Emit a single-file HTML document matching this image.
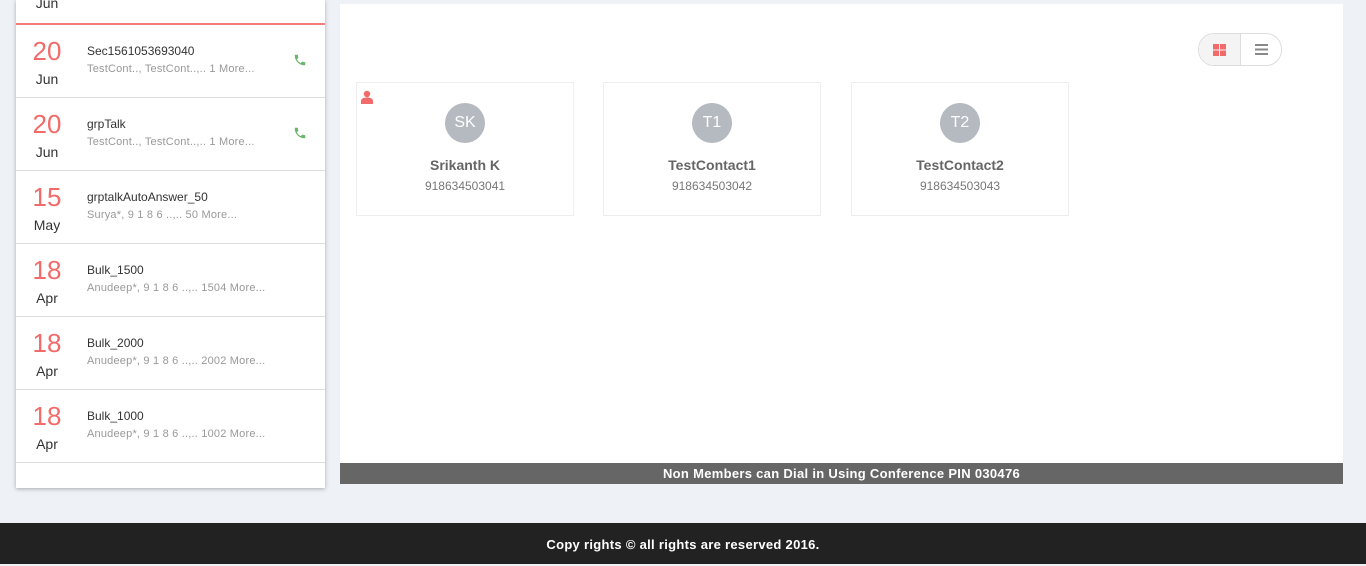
<!DOCTYPE html>
<html><head><style>
body{margin:0;width:1366px;height:564px;background:#eef1f6;font-family:"Liberation Sans",sans-serif;position:relative;overflow:hidden}
.left{position:absolute;left:16px;top:0;width:309px;height:488px;background:#fff;box-shadow:0 1px 4px rgba(0,0,0,.3)}
.row{position:absolute;left:0;width:309px;height:72px;border-bottom:1px solid #ddd}
.d{position:absolute;left:0;width:62px;text-align:center;top:11px;color:#f26b6b;font-size:26px}
.m{position:absolute;left:0;width:62px;text-align:center;top:46px;color:#333;font-size:14px}
.t{position:absolute;left:71px;top:19px;font-size:12px;color:#333}
.s{position:absolute;left:71px;top:38px;font-size:11px;color:#999;letter-spacing:.2px}
.ph{position:absolute;left:277px;top:28px}
.main{position:absolute;left:340px;top:4px;width:1003px;height:459px;background:#fff}
.bar{position:absolute;left:340px;top:463px;width:1003px;height:21px;background:#666;color:#fff;font-size:13px;text-align:center;line-height:22px;font-weight:bold;letter-spacing:.3px}
.foot{position:absolute;left:0;top:523px;width:1366px;height:41px;background:#222;color:#fff;font-size:13px;text-align:center;line-height:43px;font-weight:bold;letter-spacing:.3px}
.card{position:absolute;top:78px;width:216px;height:132px;border:1px solid #eee;text-align:center}
.av{width:40px;height:40px;border-radius:50%;background:#b5b9c0;color:#fff;font-size:16px;line-height:40px;margin:20px auto 0}
.n{color:#666;font-size:14px;font-weight:bold;margin-top:14px}
.p{color:#777;font-size:12px;margin-top:6px}
.tog{position:absolute;left:858px;top:29px;width:82px;height:31px;border:1px solid #ddd;border-radius:16px;overflow:hidden}
</style></head><body>
<div class="left">
<div class="m" style="top:-5px">Jun</div>
<div style="position:absolute;left:0;top:23px;width:309px;height:2px;background:#f47c7c"></div>
<div class="row" style="top:25px"><div class="d">20</div><div class="m">Jun</div><div class="t">Sec1561053693040</div><div class="s">TestCont.., TestCont..,.. 1 More...</div><svg class="ph" width="14" height="14" viewBox="0 0 24 24"><path fill="#6cb56c" d="M6.6 10.8c1.4 2.8 3.8 5.1 6.6 6.6l2.2-2.2c.3-.3.7-.4 1-.2 1.1.4 2.3.6 3.6.6.6 0 1 .4 1 1V20c0 .6-.4 1-1 1C10.6 21 3 13.4 3 4c0-.6.4-1 1-1h3.5c.6 0 1 .4 1 1 0 1.3.2 2.5.6 3.6.1.3 0 .7-.2 1z"/></svg></div>
<div class="row" style="top:98px"><div class="d">20</div><div class="m">Jun</div><div class="t">grpTalk</div><div class="s">TestCont.., TestCont..,.. 1 More...</div><svg class="ph" width="14" height="14" viewBox="0 0 24 24"><path fill="#6cb56c" d="M6.6 10.8c1.4 2.8 3.8 5.1 6.6 6.6l2.2-2.2c.3-.3.7-.4 1-.2 1.1.4 2.3.6 3.6.6.6 0 1 .4 1 1V20c0 .6-.4 1-1 1C10.6 21 3 13.4 3 4c0-.6.4-1 1-1h3.5c.6 0 1 .4 1 1 0 1.3.2 2.5.6 3.6.1.3 0 .7-.2 1z"/></svg></div>
<div class="row" style="top:171px"><div class="d">15</div><div class="m">May</div><div class="t">grptalkAutoAnswer_50</div><div class="s">Surya*, 9 1 8 6 ..,.. 50 More...</div></div>
<div class="row" style="top:244px"><div class="d">18</div><div class="m">Apr</div><div class="t">Bulk_1500</div><div class="s">Anudeep*, 9 1 8 6 ..,.. 1504 More...</div></div>
<div class="row" style="top:317px"><div class="d">18</div><div class="m">Apr</div><div class="t">Bulk_2000</div><div class="s">Anudeep*, 9 1 8 6 ..,.. 2002 More...</div></div>
<div class="row" style="top:390px"><div class="d">18</div><div class="m">Apr</div><div class="t">Bulk_1000</div><div class="s">Anudeep*, 9 1 8 6 ..,.. 1002 More...</div></div>
</div>
<div class="main">
<div class="tog"><div style="position:absolute;left:0;top:0;width:41px;height:31px;background:#f4f4f4;border-right:1px solid #ddd"></div>
<svg style="position:absolute;left:14px;top:10px" width="13" height="12"><rect x="0" y="0" width="6" height="5.5" fill="#f26b6b"/><rect x="7" y="0" width="6" height="5.5" fill="#f26b6b"/><rect x="0" y="6.5" width="6" height="5.5" fill="#f26b6b"/><rect x="7" y="6.5" width="6" height="5.5" fill="#f26b6b"/></svg>
<svg style="position:absolute;left:56px;top:10px" width="13" height="11"><rect y="0" width="13" height="2" fill="#888"/><rect y="4.5" width="13" height="2" fill="#888"/><rect y="9" width="13" height="2" fill="#888"/></svg></div>
<div class="card" style="left:16px"><svg style="position:absolute;left:4px;top:7px" width="12" height="14" viewBox="0 0 12 14"><circle cx="6" cy="4" r="3.2" fill="#f26b6b"/><path d="M0 14v-3c0-2 2-3.5 6-3.5s6 1.5 6 3.5v3z" fill="#f26b6b"/></svg><div class="av">SK</div><div class="n">Srikanth K</div><div class="p">918634503041</div></div>
<div class="card" style="left:263px"><div class="av">T1</div><div class="n">TestContact1</div><div class="p">918634503042</div></div>
<div class="card" style="left:511px"><div class="av">T2</div><div class="n">TestContact2</div><div class="p">918634503043</div></div>
</div>
<div class="bar">Non Members can Dial in Using Conference PIN 030476</div>
<div class="foot">Copy rights © all rights are reserved 2016.</div>
</body></html>
